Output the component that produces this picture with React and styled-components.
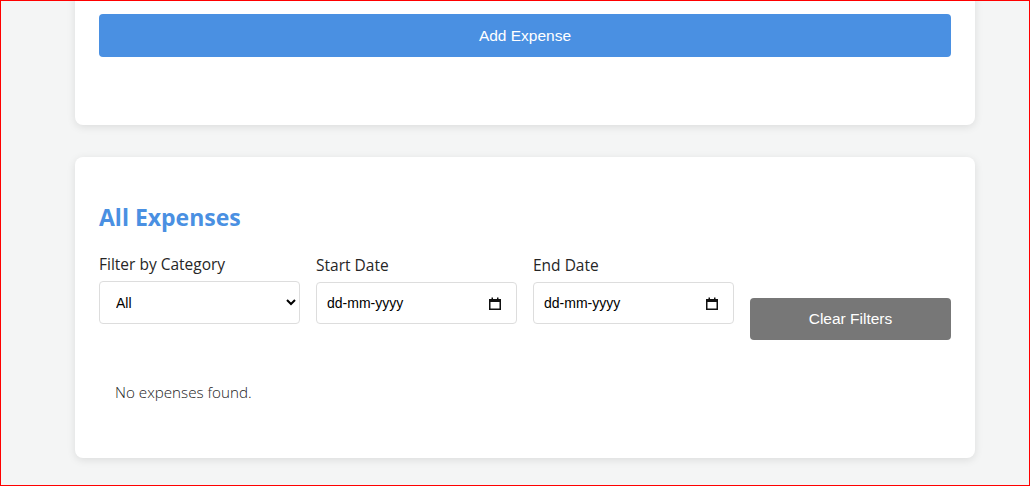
import React from "react";
import styled, { createGlobalStyle } from "styled-components";

const GlobalStyle = createGlobalStyle`
  html, body { margin: 0; padding: 0; }
  body {
    background: #f4f5f5;
    font-family: "Open Sans", "Noto Sans", sans-serif;
    color: #333;
    overflow: hidden;
  }
  body::after {
    content: "";
    position: fixed;
    inset: 0;
    border: 1px solid #ff0000;
    pointer-events: none;
  }
`;

const Page = styled.div`
  width: 900px;
  margin: 0 0 0 75px;
  display: flex;
  flex-direction: column;
  gap: 32px;
  height: 486px;
`;

const Card = styled.section`
  background: #fff;
  border-radius: 8px;
  box-shadow: 0 2px 8px rgba(0, 0, 0, 0.1);
  padding: 24px;
  margin-top: ${(p) => p.$offset || 0}px;
`;

const Button = styled.button`
  display: block;
  width: 100%;
  height: ${(p) => p.$h || 42}px;
  border: none;
  border-radius: 4px;
  background: ${(p) => p.$bg};
  color: #fff;
  font-family: "Liberation Sans", Arial, sans-serif;
  font-size: 15.5px;
  cursor: pointer;
  margin-bottom: ${(p) => p.$mb || 0}px;
`;

const Heading = styled.h2`
  margin: 20px 0 20px;
  font-size: 23px;
  font-weight: 700;
  color: #4a90e2;
  line-height: 32px;
`;

const FilterRow = styled.div`
  display: grid;
  grid-template-columns: repeat(4, 1fr);
  gap: 16px;
  align-items: end;
`;

const Group = styled.div`
  display: flex;
  flex-direction: column;
  margin-bottom: 16px;
`;

const Label = styled.label`
  font-size: 15.5px;
  font-weight: 500;
  color: #262626;
  margin-bottom: 6px;
  line-height: 22px;
`;

const fieldCss = `
  box-sizing: border-box;
  width: 100%;
  border: 1px solid #ddd;
  border-radius: 4px;
  background: #fff;
  font-family: "Liberation Sans", Arial, sans-serif;
  font-size: 14px;
  color: #000;
`;

const Select = styled.select`
  ${fieldCss}
  height: 43px;
  padding: 0 8px 0 12px;
`;

const DateField = styled.div`
  position: relative;
  height: 42px;
`;

const DateInput = styled.input`
  ${fieldCss}
  height: 42px;
  padding: 0 34px 0 10px;
  outline: none;
  &::placeholder {
    color: #000;
    opacity: 1;
  }
`;

const CalendarIcon = styled.svg`
  position: absolute;
  right: 16px;
  top: 15px;
  width: 12px;
  height: 13px;
  pointer-events: none;
`;

const Empty = styled.p`
  margin: 17px 0 7px;
  padding: 24px 16px;
  font-size: 15.2px;
  font-weight: 300;
  line-height: 22px;
  color: #222;
`;

function DatePicker() {
  return (
    <DateField>
      <DateInput type="text" placeholder="dd-mm-yyyy" />
      <CalendarIcon viewBox="0 0 12 13" aria-hidden="true">
        <rect x="0.75" y="2.75" width="10.5" height="9.5" fill="none" stroke="#111" strokeWidth="1.5" />
        <rect x="0" y="2" width="12" height="3" fill="#111" />
        <rect x="2.5" y="0.5" width="1.5" height="2" fill="#111" />
        <rect x="8" y="0.5" width="1.5" height="2" fill="#111" />
      </CalendarIcon>
    </DateField>
  );
}

export default function App() {
  return (
    <>
      <GlobalStyle />
      <Page>
        <Card $offset={-10}>
          <Button $bg="#4a90e2" $h={43} $mb={44}>Add Expense</Button>
        </Card>
        <Card>
          <Heading>All Expenses</Heading>
          <FilterRow>
            <Group>
              <Label>Filter by Category</Label>
              <Select defaultValue="All">
                <option>All</option>
                <option>Food</option>
                <option>Transport</option>
              </Select>
            </Group>
            <Group>
              <Label>Start Date</Label>
              <DatePicker />
            </Group>
            <Group>
              <Label>End Date</Label>
              <DatePicker />
            </Group>
            <Button $bg="#777777" $h={42}>Clear Filters</Button>
          </FilterRow>
          <Empty>No expenses found.</Empty>
        </Card>
      </Page>
    </>
  );
}
